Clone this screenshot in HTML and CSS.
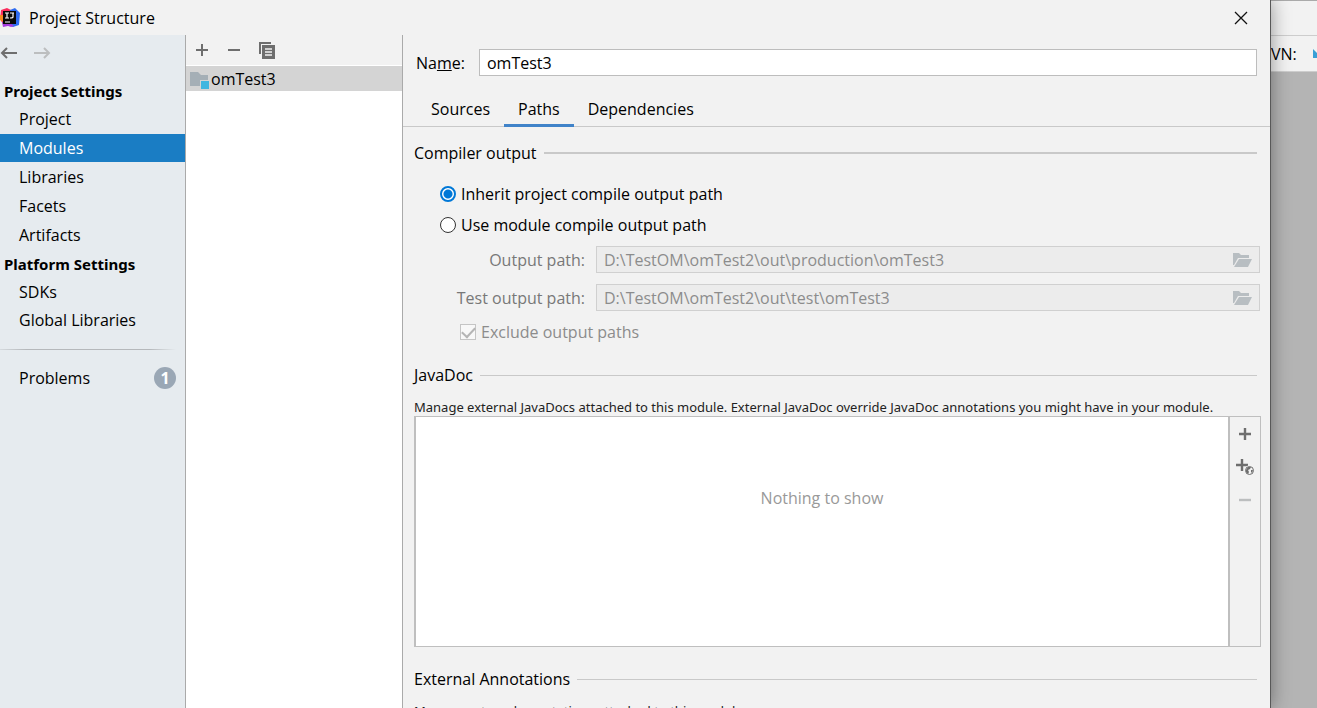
FILE: index.html
```html
<!DOCTYPE html>
<html lang="en">
<head>
<meta charset="utf-8">
<title>Project Structure</title>
<link rel="stylesheet" href="styles.css">
</head>
<body>
<div class="screen">
  <div class="dialog">
    <header class="titlebar">
      <svg class="logo" width="20" height="20" viewBox="0 0 20 20" aria-hidden="true">
        <path d="M1 2 7 0l4 2-2 16-6-2-3-5z" fill="#fb2c5c"/>
        <path d="M0 7h5v8l-5-3z" fill="#f98a21"/>
        <path d="M10 2 15 0l5 5-1 12-6 2-5-2z" fill="#2e6cf0"/>
        <path d="M2 14h7l5 4-3 1-3-1-5 1z" fill="#a63be0"/>
        <path d="M3 3h13v13H3z" fill="#090909"/>
        <path d="M5 5h4M7 5v5M5 10h4M10 5h4M13 5v4q0 1-3 1M5 14h5" fill="none" stroke="#fff" stroke-width="1.2"/>
      </svg>
      <h1 class="title">Project Structure</h1>
      <button class="icon-button close" aria-label="Close">
        <svg width="14" height="14" viewBox="0 0 14 14"><path d="m1 1 12 12M13 1 1 13" stroke="#111" stroke-width="1.3"/></svg>
      </button>
    </header>
    <div class="columns">
      <nav class="sidebar">
        <div class="history">
          <button class="icon-button" aria-label="Back"><svg width="18" height="14" viewBox="0 0 18 14"><path d="M17 7H2M7 2 2 7l5 5" fill="none" stroke="#6e6e6e" stroke-width="2"/></svg></button>
          <button class="icon-button" aria-label="Forward" disabled><svg width="18" height="14" viewBox="0 0 18 14"><path d="M1 7h15M11 2l5 5-5 5" fill="none" stroke="#bcbebf" stroke-width="2"/></svg></button>
        </div>
        <h2 class="nav-heading">Project Settings</h2>
        <ul class="nav-list spaced">
          <li><a href="#project">Project</a></li>
          <li><a href="#modules" class="selected" aria-current="page">Modules</a></li>
          <li><a href="#libraries">Libraries</a></li>
          <li><a href="#facets">Facets</a></li>
          <li><a href="#artifacts">Artifacts</a></li>
        </ul>
        <h2 class="nav-heading">Platform Settings</h2>
        <ul class="nav-list">
          <li><a href="#sdks">SDKs</a></li>
          <li><a href="#global">Global Libraries</a></li>
        </ul>
        <hr class="nav-rule">
        <ul class="nav-list">
          <li><a href="#problems">Problems<span class="count">1</span></a></li>
        </ul>
      </nav>
      <section class="modules" aria-label="Modules">
        <div class="module-tools">
          <button class="icon-button" aria-label="Add"><svg width="14" height="14" viewBox="0 0 14 14"><path d="M7 1v12M1 7h12" stroke="#6e6e6e" stroke-width="2"/></svg></button>
          <button class="icon-button" aria-label="Remove"><svg width="14" height="14" viewBox="0 0 14 14"><path d="M1 7h12" stroke="#6e6e6e" stroke-width="2"/></svg></button>
          <button class="icon-button" aria-label="Copy"><svg width="16" height="17" viewBox="0 0 16 17"><path d="M1 12V1h11" fill="none" stroke="#6e6e6e" stroke-width="2"/><path d="M3 3h13v14H3z" fill="#6e6e6e"/><path d="M6 7h7M6 10h7M6 13h7" stroke="#f2f2f2" stroke-width="1.300"/></svg></button>
        </div>
        <ul class="module-list">
          <li class="module">
            <svg width="20" height="20" viewBox="0 0 20 20" aria-hidden="true"><path d="M0 3h8l3 3h7v11H0z" fill="#a5afb6"/><path d="M10 11h9v9h-9z" fill="#d4d4d4"/><path d="M11 12h8v8h-8z" fill="#40b6e0"/></svg>
            <span>omTest3</span>
          </li>
        </ul>
      </section>
      <main class="editor">
        <div class="name-row">
          <label for="name">Na<u>m</u>e:</label>
          <input id="name" class="field" type="text" value="omTest3">
        </div>
        <div class="tabs" role="tablist">
          <button class="tab" role="tab" aria-selected="false">Sources</button>
          <button class="tab active" role="tab" aria-selected="true">Paths</button>
          <button class="tab" role="tab" aria-selected="false">Dependencies</button>
        </div>
        <div class="content">
          <h2 class="group-title heavy">Compiler output</h2>
          <div class="options">
            <label class="radio-row"><input type="radio" name="out" checked>Inherit project compile output path</label>
            <label class="radio-row"><input type="radio" name="out">Use module compile output path</label>
            <div class="paths">
              <label for="out-path">Output path:</label>
              <div class="path-field">
                <input id="out-path" type="text" value="D:\TestOM\omTest2\out\production\omTest3" disabled>
                <button class="icon-button" aria-label="Browse output path" disabled><svg width="20" height="15" viewBox="0 0 20 15"><path d="M0 0h6l2 2h8v3H5L1 12H0z" fill="#b8bec2"/><path d="M6 6h13l-4 8H1z" fill="#b8bec2"/></svg></button>
              </div>
              <label for="test-path">Test output path:</label>
              <div class="path-field">
                <input id="test-path" type="text" value="D:\TestOM\omTest2\out\test\omTest3" disabled>
                <button class="icon-button" aria-label="Browse test output path" disabled><svg width="20" height="15" viewBox="0 0 20 15"><path d="M0 0h6l2 2h8v3H5L1 12H0z" fill="#b8bec2"/><path d="M6 6h13l-4 8H1z" fill="#b8bec2"/></svg></button>
              </div>
            </div>
            <label class="check-row"><input type="checkbox" checked disabled>Exclude output paths</label>
          </div>
          <h2 class="group-title">JavaDoc</h2>
          <p class="hint">Manage external JavaDocs attached to this module. External JavaDoc override JavaDoc annotations you might have in your module.</p>
          <div class="doc-panel">
            <div class="doc-list">Nothing to show</div>
            <div class="doc-tools">
              <button class="icon-button" aria-label="Add path"><svg width="14" height="14" viewBox="0 0 14 14"><path d="M7 1v12M1 7h12" stroke="#6e6e6e" stroke-width="2.400"/></svg></button>
              <button class="icon-button" aria-label="Add URL"><svg width="20" height="18" viewBox="0 0 20 18"><path d="M7 1v12M1 7h12" stroke="#6e6e6e" stroke-width="2.400"/><circle cx="14.500" cy="12.500" r="5" fill="#f2f2f2"/><circle cx="14.500" cy="12.500" r="4" fill="#f2f2f2" stroke="#6e6e6e" stroke-width="1"/><path d="M11 12 13 9h3l-1 2-2 1 1 2-1 2-2-2zM16 12h2l-1 3-1-1z" fill="#6e6e6e"/></svg></button>
              <button class="icon-button" aria-label="Remove" disabled><svg width="14" height="14" viewBox="0 0 14 14"><path d="M1 7h12" stroke="#bcbebf" stroke-width="2.400"/></svg></button>
            </div>
          </div>
          <h2 class="group-title">External Annotations</h2>
          <p class="hint">Manage external annotations attached to this module.</p>
        </div>
      </main>
    </div>
  </div>
  <aside class="behind">
    <div class="behind-title"></div>
    <div class="behind-tools"><span>VN:</span><svg width="5" height="9" viewBox="0 0 5 9" aria-hidden="true"><path d="M1 0l4 4v5H1z" fill="#389fd6"/></svg></div>
  </aside>
</div>
</body>
</html>
```
FILE: styles.css
```css
* { box-sizing: border-box; }

body {
  margin: 0;
  font: 16px/20px "Open Sans", "Noto Sans", sans-serif;
  color: #000;
  background: #b4b4b4;
}

h1, h2, p, ul { margin: 0; padding: 0; font-size: inherit; font-weight: 400; }
ul { list-style: none; }
a { color: inherit; text-decoration: none; }
input, button { font: inherit; color: inherit; }

.screen { display: flex; height: 100vh; overflow: hidden; }

.dialog {
  flex: 1;
  min-width: 0;
  display: flex;
  flex-direction: column;
  position: relative;
  background: #f2f2f2;
  border-right: 1px solid #585858;
  box-shadow: 0 0 18px rgba(0, 0, 0, 0.4);
}

.icon-button {
  display: flex;
  align-items: center;
  justify-content: center;
  padding: 0;
  border: 0;
  background: none;
}
.icon-button svg { display: block; }

.titlebar { display: flex; align-items: center; height: 35px; flex: none; }
.title { flex: 1; padding-left: 9px; }
.close { width: 58px; height: 35px; }

.columns { flex: 1; min-height: 0; display: flex; }

.sidebar { width: 186px; flex: none; background: #e6ebef; border-right: 1px solid #aaa; }
.history { display: flex; gap: 15px; height: 42px; padding: 11px 0 0; align-items: flex-start; }
.nav-heading { height: 28px; padding-left: 4px; line-height: 28px; font-family: "Noto Sans", sans-serif; font-size: 15px; font-weight: 700; }
.nav-list { display: flex; flex-direction: column; }
.spaced { gap: 1px; padding-bottom: 1px; }
.nav-list a { display: flex; align-items: center; justify-content: space-between; height: 28px; padding: 0 9px 0 19px; }
.nav-list .selected { background: #1a7dc4; color: #fff; }
.nav-rule { height: 1px; margin: 15px 9px 14px 0; border: 0; background: linear-gradient(90deg, #d5dade, #b5b8bb 15%, #b5b8bb 85%, #e6ebef); }
.count { width: 22px; height: 22px; border-radius: 50%; background: #9aa7b5; color: #fff; font-weight: 700; line-height: 22px; text-align: center; }

.modules { width: 217px; flex: none; background: #fff; border-right: 1px solid #aaa; }
.module-tools { display: flex; align-items: center; gap: 18px; height: 30px; padding-left: 9px; background: #f2f2f2; }
.module-list { padding-top: 1px; }
.module { display: flex; align-items: center; gap: 1px; height: 25px; padding-left: 4px; background: #d4d4d4; }

.editor { flex: 1; min-width: 0; }
.name-row { display: flex; align-items: center; gap: 14px; padding: 14px 13px 0 13px; }
.field { flex: 1; min-width: 0; height: 27px; padding: 0 7px; border: 1px solid #bdbdbd; background: #fff; outline: 0; }

.tabs { display: flex; height: 51px; padding: 16px 0 0 14px; border-bottom: 1px solid #c9c9c9; }
.tab { height: 35px; padding: 1px 14px 0; border: 0; border-bottom: 3px solid transparent; background: none; }
.tab.active { border-bottom-color: #4083c9; }

.content { padding: 16px 13px 0 11px; }
.group-title { display: flex; align-items: center; gap: 7px; }
.group-title::after { content: ""; flex: 1; height: 1px; background: #c9c9c9; }
.heavy::after { height: 2px; }

.options { padding: 21px 0 23px 26px; margin-right: -3px; }
.radio-row, .check-row { display: flex; align-items: center; gap: 5px; height: 20px; }
.radio-row + .radio-row { margin-top: 11px; }
.radio-row input { appearance: none; width: 16px; height: 16px; margin: 0; border: 1px solid #333; border-radius: 50%; background: #fff; }
.radio-row input:checked { border: 2px solid #0078d7; background: radial-gradient(#0078d7 4px, #fff 5px); }

.paths { display: grid; grid-template-columns: 145px 1fr; column-gap: 11px; row-gap: 11px; align-items: center; padding-top: 11px; color: #787878; }
.paths label { text-align: right; }
.path-field { display: flex; align-items: center; height: 27px; padding: 2px 6px 0 7px; border: 1px solid #d0d0d0; background: #ececec; }
.path-field input { flex: 1; min-width: 0; padding: 0 0 2px; border: 0; background: none; color: #8c8c8c; }
.check-row { margin: 11px 0 0 20px; color: #8c8c8c; }
.check-row input { appearance: none; width: 16px; height: 16px; margin: 0; border: 1px solid #c5c5c5; background: #f8f8f8; display: grid; place-items: center; }
.check-row input::before { content: ""; width: 11px; height: 6px; border: solid #b5b5b5; border-width: 0 0 2px 2px; transform: rotate(-47deg); margin-bottom: 3px; }

.hint { padding-top: 13px; font-family: "Noto Sans", sans-serif; font-size: 13px; line-height: 18px; color: #222; white-space: nowrap; }
.doc-panel { display: flex; height: 231px; margin: 0 -4px 22px 0; border: 1px solid #bfbfbf; border-left-width: 2px; }
.doc-list { flex: 1; padding-top: 71px; border-right: 2px solid #bfbfbf; background: #fff; color: #999; text-align: center; }
.doc-tools { width: 30px; display: flex; flex-direction: column; align-items: center; gap: 17px; padding-top: 10px; }

.behind { width: 46px; flex: none; background: #b4b4b4; border-top: 1px solid #aaa; }
.behind-title { height: 35px; background: #f2f2f2; border-bottom: 1px solid #cdcdcd; }
.behind-tools { display: flex; align-items: center; justify-content: space-between; height: 36px; background: #f2f2f2; border-bottom: 1px solid #cdcdcd; }
```
